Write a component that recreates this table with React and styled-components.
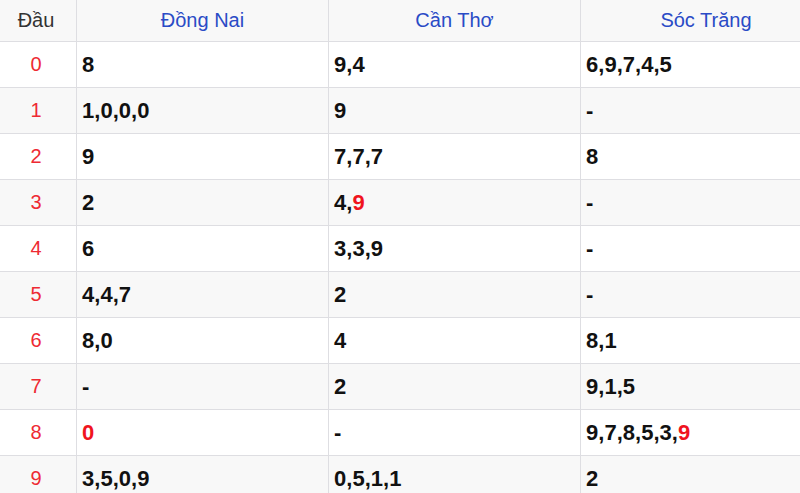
import styled, { createGlobalStyle } from 'styled-components';

const GlobalStyle = createGlobalStyle`
  html, body {
    margin: 0;
    padding: 0;
    background: #fff;
    overflow: hidden;
  }
  body {
    font-family: "Liberation Sans", Arial, sans-serif;
  }
`;

const Table = styled.table`
  border-collapse: collapse;
  table-layout: fixed;
  width: 836px;
  margin-left: -5px;
`;

const HeadCell = styled.th`
  height: 41px;
  padding: 0;
  font-size: 20px;
  font-weight: normal;
  text-align: center;
  vertical-align: middle;
  color: ${(p) => (p.$first ? '#333' : '#2a4bc6')};
  background: #f8f8f8;
  border: 1px solid #dedee2;
  border-top: none;
`;

const Row = styled.tr`
  background: ${(p) => (p.$striped ? '#f8f8f8' : '#fff')};
`;

const HeadCol = styled.td`
  height: 45px;
  padding: 0;
  text-align: center;
  font-size: 20px;
  color: #ee2a33;
  border: 1px solid #dedee2;
`;

const Cell = styled.td`
  height: 45px;
  padding: 0 0 0 5px;
  font-size: 22px;
  font-weight: bold;
  color: #111;
  border: 1px solid #dedee2;
`;

const Hit = styled.span`
  color: #f0141e;
`;

const rows = [
  ['8', '9,4', '6,9,7,4,5'],
  ['1,0,0,0', '9', '-'],
  ['9', '7,7,7', '8'],
  ['2', '4,*9', '-'],
  ['6', '3,3,9', '-'],
  ['4,4,7', '2', '-'],
  ['8,0', '4', '8,1'],
  ['-', '2', '9,1,5'],
  ['*0', '-', '9,7,8,5,3,*9'],
  ['3,5,0,9', '0,5,1,1', '2'],
];

// "*" marks the digit that is highlighted in red
function Value({ text }) {
  return text.split(',').map((part, i) => (
    <span key={i}>
      {i > 0 && ','}
      {part.startsWith('*') ? <Hit>{part.slice(1)}</Hit> : part}
    </span>
  ));
}

export default function App() {
  return (
    <>
      <GlobalStyle />
      <Table>
        <colgroup>
          <col style={{ width: 81 }} />
          <col style={{ width: 252 }} />
          <col style={{ width: 252 }} />
          <col style={{ width: 251 }} />
        </colgroup>
        <thead>
          <tr>
            <HeadCell $first>Đầu</HeadCell>
            <HeadCell>Đồng Nai</HeadCell>
            <HeadCell>Cần Thơ</HeadCell>
            <HeadCell>Sóc Trăng</HeadCell>
          </tr>
        </thead>
        <tbody>
          {rows.map((r, i) => (
            <Row key={i} $striped={i % 2 === 1}>
              <HeadCol>{i}</HeadCol>
              {r.map((v, j) => (
                <Cell key={j}>
                  <Value text={v} />
                </Cell>
              ))}
            </Row>
          ))}
        </tbody>
      </Table>
    </>
  );
}
